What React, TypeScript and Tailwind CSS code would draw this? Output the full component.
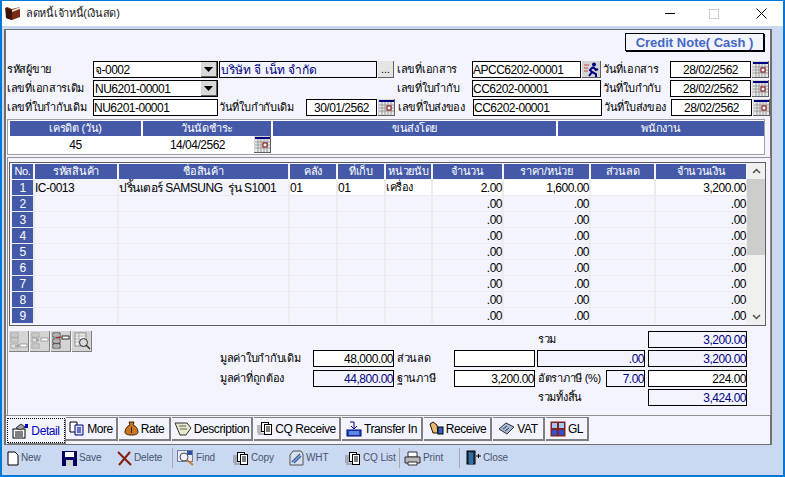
import React from 'react';

const FONT = "font-['Liberation_Sans','Noto_Sans','DejaVu_Sans',sans-serif]";
const GRID_COLS = 'grid grid-cols-[21px_82px_169px_46px_46px_45px_69px_85px_63px_90px] gap-x-[2px]';

const BookIcon = () => (
  <svg width="16" height="15" viewBox="0 0 16 15">
    <path d="M0 2l2-1 5 2 8-2v10l-8 3-6-2z" fill="#7a2a10" />
    <path d="M1 2l6 2v10l-6-2z" fill="#3a1408" />
    <path d="M7 4l8-3v2l-8 3z" fill="#e8e0d0" />
  </svg>
);

const CalendarIcon = () => (
  <svg width="15" height="15" viewBox="0 0 15 15">
    <rect x="0" y="0" width="15" height="15" fill="#e8e8e8" />
    <rect x="0" y="0" width="15" height="2" fill="#000080" />
    <path d="M0 5h15M0 8h15M0 11h15M3 2v13M6 2v13M9 2v13M12 2v13" stroke="#9a9a9a" strokeWidth="1" />
    <rect x="8" y="6" width="4" height="4" fill="#fff" stroke="#800000" />
  </svg>
);

const CalButton = () => (
  <div className="flex h-[17px] w-[17px] shrink-0 items-center justify-center border-r border-b border-[#606060] bg-[#d4d4d4]">
    <CalendarIcon />
  </div>
);

const RunIcon = () => (
  <svg width="15" height="15" viewBox="0 0 15 15">
    <path d="M0 3h5M0 6h4M0 9h4" stroke="#d04040" strokeWidth="1" />
    <circle cx="10" cy="2.5" r="2" fill="#000080" />
    <path d="M9 5l-3 3 2 2-3 4M9 5l3 3 2-1M8 10l4 2 0 3" stroke="#000080" strokeWidth="2" fill="none" />
  </svg>
);

const Arrow = () => (
  <svg width="9" height="5" viewBox="0 0 9 5"><path d="M0 0h9L4.5 5z" fill="#000" /></svg>
);

const Box = ({ className = '', children }: { className?: string; children?: React.ReactNode }) => (
  <div className={'flex h-[17px] shrink-0 items-center overflow-hidden whitespace-nowrap border border-black text-[12px] leading-none tracking-[-0.5px] ' + className}>
    {children}
  </div>
);

const Label = ({ className = '', children }: { className?: string; children: React.ReactNode }) => (
  <div className={'flex h-[17px] shrink-0 items-center whitespace-nowrap text-[11px] leading-none tracking-[-0.3px] text-black ' + className}>
    {children}
  </div>
);

const Combo = ({ value }: { value: string }) => (
  <Box className="w-[125px] justify-between bg-white pl-[1px]">
    <span>{value}</span>
    <span className="flex h-[15px] w-[16px] items-center justify-center border-r border-b border-[#606060] bg-[#d8d8d8]"><Arrow /></span>
  </Box>
);

const items = [
  { no: '1', code: 'IC-0013', name: 'ปริ้นเตอร์ SAMSUNG  รุ่น S1001', wh: '01', loc: '01', unit: 'เครื่อง', qty: '2.00', price: '1,600.00', amount: '3,200.00' },
  ...['2', '3', '4', '5', '6', '7', '8', '9'].map((no) => ({ no, code: '', name: '', wh: '', loc: '', unit: '', qty: '.00', price: '.00', amount: '.00' })),
];

const headers = ['No.', 'รหัสสินค้า', 'ชื่อสินค้า', 'คลัง', 'ที่เก็บ', 'หน่วยนับ', 'จำนวน', 'ราคา/หน่วย', 'ส่วนลด', 'จำนวนเงิน'];

const ItemGrid = () => (
  <div className="ml-[1px] flex h-[164px] w-[757px] border border-[#606060] bg-[#f3f4fd]">
    <div className="w-[737px] pl-[2px] pt-[1px]">
      <div className={GRID_COLS}>
        {headers.map((h) => (
          <div key={h} className="flex h-[15px] items-center justify-center whitespace-nowrap bg-[#445aa9] text-[11px] leading-none tracking-[-0.3px] text-white">{h}</div>
        ))}
      </div>
      <div className="mt-[1px] flex flex-col gap-y-[1px] bg-[#ececef]">
        {items.map((r) => {
          const first = r.no === '1';
          const cell = first ? 'bg-white' : 'bg-[#f3f4fd]';
          return (
            <div key={r.no} className={GRID_COLS + ' h-[15px] text-[12px] leading-none tracking-[-0.5px] text-black'}>
              <div className="flex items-center justify-center bg-[#445aa9] text-white">{r.no}</div>
              <div className="flex items-center bg-[#f3f4fd]">{r.code}</div>
              <div className="flex items-center whitespace-pre bg-[#f3f4fd]">{r.name}</div>
              <div className={'flex items-center ' + cell}>{r.wh}</div>
              <div className={'flex items-center ' + cell}>{r.loc}</div>
              <div className={'flex items-center whitespace-nowrap text-[11px] ' + cell}>{r.unit}</div>
              <div className={'flex items-center justify-end ' + cell}>{r.qty}</div>
              <div className={'flex items-center justify-end ' + cell}>{r.price}</div>
              <div className={cell} />
              <div className={'flex items-center justify-end ' + cell}>{r.amount}</div>
            </div>
          );
        })}
      </div>
    </div>
    <div className="flex w-[18px] flex-col items-center bg-[#f0f0f0]">
      <div className="flex h-[16px] w-full items-center justify-center">
        <svg width="9" height="6" viewBox="0 0 9 6"><path d="M1 5l3.5-3.5L8 5" stroke="#505050" strokeWidth="1.5" fill="none" /></svg>
      </div>
      <div className="h-[76px] w-full bg-[#cdcdcd]" />
      <div className="flex-1" />
      <div className="flex h-[16px] w-full items-center justify-center">
        <svg width="9" height="6" viewBox="0 0 9 6"><path d="M1 1l3.5 3.5L8 1" stroke="#505050" strokeWidth="1.5" fill="none" /></svg>
      </div>
    </div>
  </div>
);

const Blocks = ({ ys, color }: { ys: number[]; color: string }) => (
  <>
    {ys.map((y) => (
      <g key={y}>
        <rect x="1" y={y} width="7" height="4" fill={color === '#000' ? '#fff' : '#e0e0e0'} stroke={color} strokeWidth="0.7" />
        <path d={'M2 ' + (y + 2) + 'h5'} stroke={color} strokeWidth="0.6" />
      </g>
    ))}
  </>
);

const TreeButton = ({ children }: { children: React.ReactNode }) => (
  <div className="flex h-[21px] w-[20px] shrink-0 items-center justify-center border-r border-b border-[#808080] bg-[#d4d4d4]">
    <svg width="18" height="18" viewBox="0 0 18 18">{children}</svg>
  </div>
);

const TreeButtons = () => (
  <div className="mt-[5px] flex h-[21px] w-[85px] shrink-0 items-center gap-x-[1px]">
    <TreeButton>
      <Blocks ys={[1, 6]} color="#909090" />
      <rect x="1" y="12" width="7" height="4" fill="#e0e0e0" stroke="#909090" strokeWidth="0.7" />
      <path d="M9 14h-4" stroke="#808080" />
      <rect x="10" y="12" width="7" height="3" fill="#fff" stroke="#808080" strokeWidth="0.7" />
    </TreeButton>
    <TreeButton>
      <Blocks ys={[1, 12]} color="#909090" />
      <rect x="1" y="6" width="5" height="4" fill="#e0e0e0" stroke="#909090" strokeWidth="0.7" />
      <path d="M8 8h-3" stroke="#808080" />
      <rect x="10" y="6" width="7" height="3" fill="#fff" stroke="#808080" strokeWidth="0.7" />
    </TreeButton>
    <TreeButton>
      <Blocks ys={[1, 7, 12]} color="#000" />
      <path d="M4 5.500h5" stroke="#c02020" />
      <rect x="10" y="4" width="7" height="3" fill="#fff" stroke="#000" strokeWidth="0.8" />
    </TreeButton>
    <TreeButton>
      <rect x="2" y="1" width="11" height="13" fill="#f0f0f0" stroke="#707070" strokeWidth="0.7" />
      <path d="M2 4h11M2 7h5M2 10h5M6 1v13" stroke="#909090" strokeWidth="0.6" />
      <circle cx="10.500" cy="10.500" r="4" fill="#d8d8d8" stroke="#303030" />
      <path d="M13 13l4 4" stroke="#303030" strokeWidth="1.5" />
    </TreeButton>
  </div>
);

function StackIcon() {
  return (
    <svg width="16" height="13" viewBox="0 0 16 13">
      <path d="M0 4h4M0 6h4M0 8h4M0 10h4M1 12h6" stroke="#808080" />
      <rect x="4.500" y="0.500" width="7" height="9" fill="#fff" stroke="#000" />
      <rect x="7.500" y="2.500" width="7" height="10" fill="#fff" stroke="#000" />
      <path d="M9 5h4M9 7h4M9 9h4" stroke="#000" />
    </svg>
  );
}

const tabs = [
  { label: 'More', w: 'w-[52px]', icon: <svg width="16" height="15" viewBox="0 0 16 15"><path d="M1 1h7v10H1z" fill="#fff" stroke="#000" /><path d="M6 4h8v10H6z" fill="#d8e0ff" stroke="#000080" /><path d="M8 7h4M8 9h4M8 11h4" stroke="#000080" /></svg> },
  { label: 'Rate', w: 'w-[52px]', icon: <svg width="15" height="15" viewBox="0 0 15 15"><path d="M5 1h5L9 4c3 1 5 4 5 7 0 2-2 3-6.500 3S1 13 1 11c0-3 2-6 5-7z" fill="#c87820" stroke="#402000" /><path d="M7.500 6v6" stroke="#402000" /></svg> },
  { label: 'Description', w: 'w-[81px]', icon: <svg width="18" height="15" viewBox="0 0 18 15"><path d="M1 2h12l4 5-5 7H6z" fill="#e8e8c8" stroke="#303030" /><path d="M5 5h7M6 8h7" stroke="#606060" /></svg> },
  { label: 'CQ Receive', w: 'w-[87px]', icon: <StackIcon /> },
  { label: 'Transfer In', w: 'w-[81px]', icon: <svg width="16" height="16" viewBox="0 0 16 16"><rect x="1" y="9" width="14" height="6" fill="#2050c0" stroke="#000080" /><path d="M8 1v6M5 5l3 3 3-3M4 1h4" stroke="#000080" fill="none" /><path d="M3 11h10M3 13h10" stroke="#a0c0ff" /></svg> },
  { label: 'Receive', w: 'w-[68px]', icon: <svg width="16" height="15" viewBox="0 0 16 15"><path d="M2 3l3-2 4 3 1 8H5z" fill="#e8b878" stroke="#201000" /><rect x="10" y="6" width="5" height="7" fill="#3060c0" stroke="#000" /></svg> },
  { label: 'VAT', w: 'w-[52px]', icon: <svg width="17" height="13" viewBox="0 0 17 13"><path d="M1 7l7-6 8 4-7 7z" fill="#a8b8d8" stroke="#303030" /><path d="M5 7l4-3M7 9l4-3" stroke="#404040" /></svg> },
  { label: 'GL', w: 'w-[43px]', icon: <svg width="16" height="16" viewBox="0 0 16 16"><rect x="0.500" y="0.500" width="15" height="15" fill="#802020" /><path d="M2 2h5v5H2zM9 2h5v5H9z" fill="#a0c8f8" /><path d="M2 9h5v5H2zM9 9h5v5H9z" fill="#3050d0" /></svg> },
];

const tools = [
  { label: 'New', w: 'w-[55px]', icon: <svg width="12" height="15" viewBox="0 0 12 15"><path d="M1 1h7l3 3v10H1z" fill="#fff" stroke="#000" /></svg> },
  { label: 'Save', w: 'w-[55px]', icon: <svg width="15" height="15" viewBox="0 0 15 15"><rect width="15" height="15" fill="#000060" /><rect x="3" y="1" width="9" height="5" fill="#fff" /><rect x="4" y="9" width="7" height="6" fill="#d0d0d0" /></svg> },
  { label: 'Delete', w: 'w-[53px]', icon: <svg width="15" height="15" viewBox="0 0 15 15"><path d="M1 1l13 13M13 1L2 14" stroke="#802010" strokeWidth="2" /></svg> },
];

const tools2 = [
  { label: 'Find', w: 'w-[56px]', icon: <svg width="17" height="16" viewBox="0 0 17 16"><rect x="0.500" y="0.500" width="15" height="11" fill="#e8e8f8" stroke="#7080a0" /><rect x="10" y="1" width="5" height="4" fill="#3050a0" /><circle cx="7" cy="7" r="4" fill="#f0f4ff" stroke="#505050" /><path d="M10 10l6 5" stroke="#c08030" strokeWidth="2" /></svg> },
  { label: 'Copy', w: 'w-[56px]', icon: <StackIcon /> },
  { label: 'WHT', w: 'w-[56px]', icon: <svg width="15" height="16" viewBox="0 0 15 16"><path d="M4 1h8l2 3v11H1V5z" fill="#d8e0f0" stroke="#505050" /><path d="M3 12l8-8M5 13l7-7" stroke="#3060a0" strokeWidth="1.500" /></svg> },
  { label: 'CQ List', w: 'w-[52px]', icon: <StackIcon /> },
];

const Tool = ({ label, w, icon }: { label: string; w: string; icon: React.ReactNode }) => (
  <div className={'flex h-[22px] shrink-0 items-center gap-[2px] whitespace-nowrap text-[10px] leading-none tracking-[-0.1px] text-[#46566e] ' + w}>
    {icon}
    <span>{label}</span>
  </div>
);

const Sep = () => <div className="ml-[2px] mr-[4px] h-[20px] w-[1px] shrink-0 bg-[#a8a8a8]" />;

export default function App() {
  return (
    <div className={'flex h-[477px] w-[785px] flex-col overflow-hidden border-x-2 border-b-2 border-t border-[#0078d7] bg-[#cad8f1] text-black ' + FONT}>
      <div className="flex h-[25px] shrink-0 items-center bg-white pl-[3px]">
        <BookIcon />
        <span className="ml-[5px] text-[11px] tracking-[-0.3px] text-[#202020]">ลดหนี้เจ้าหนี้(เงินสด)</span>
        <div className="ml-auto flex items-center">
          <div className="h-[1px] w-[10px] bg-black" />
          <div className="ml-[34px] h-[10px] w-[10px] border border-[#cccccc]" />
          <svg className="ml-[37px] mr-[16px]" width="11" height="11" viewBox="0 0 11 11"><path d="M0.500 0.500l10 10M10.500 0.500l-10 10" stroke="#000" /></svg>
        </div>
      </div>

      <div className="ml-[2px] mt-[3px] flex h-[416px] w-[768px] shrink-0 flex-col border-x-2 border-y border-[#707070] bg-[#f3f4fd]">
        <div className="flex h-[31px] shrink-0 justify-end pr-[6px] pt-[3px]">
          <div className="flex h-[18px] w-[139px] items-center justify-center border border-black text-[13px] font-bold leading-none text-[#4468c4] shadow-[1px_1px_0_#000]">
            Credit Note( Cash )
          </div>
        </div>

        <div className="flex shrink-0 flex-col gap-y-[2px] pl-[1px]">
          <div className="flex items-center">
            <Label className="w-[86px]">รหัสผู้ขาย</Label>
            <Combo value="จ-0002" />
            <Box className="ml-[1px] w-[158px] bg-[#f3f4fd] pl-[1px] text-[11px] tracking-normal text-[#000080]">บริษัท จี เน็ท จำกัด</Box>
            <div className="ml-[1px] flex h-[17px] w-[16px] items-center justify-center border-r border-b border-[#606060] bg-[#e4e4e4] text-[11px] leading-none">...</div>
            <Label className="ml-[3px] w-[75px]">เลขที่เอกสาร</Label>
            <Box className="w-[109px] bg-white">APCC6202-00001</Box>
            <div className="ml-[1px] flex h-[17px] w-[19px] items-center justify-center border-r border-b border-[#606060] bg-[#d4d4d4]"><RunIcon /></div>
            <Label className="ml-[2px] w-[67px]">วันที่เอกสาร</Label>
            <Box className="w-[81px] justify-center bg-white">28/02/2562</Box>
            <div className="ml-[1px]"><CalButton /></div>
          </div>
          <div className="flex items-center">
            <Label className="w-[86px]">เลขที่เอกสารเดิม</Label>
            <Combo value="NU6201-00001" />
            <div className="w-[179px] shrink-0" />
            <Label className="w-[75px]">เลขที่ใบกำกับ</Label>
            <Box className="w-[129px] bg-white">CC6202-00001</Box>
            <Label className="ml-[2px] w-[67px]">วันที่ใบกำกับ</Label>
            <Box className="w-[81px] justify-center bg-white">28/02/2562</Box>
            <div className="ml-[1px]"><CalButton /></div>
          </div>
          <div className="flex items-center">
            <Label className="w-[86px]">เลขที่ใบกำกับเดิม</Label>
            <Box className="w-[125px] bg-white">NU6201-00001</Box>
            <Label className="ml-[1px] w-[87px]">วันที่ใบกำกับเดิม</Label>
            <Box className="w-[71px] justify-center bg-white">30/01/2562</Box>
            <div className="ml-[1px]"><CalButton /></div>
            <Label className="ml-[3px] w-[75px]">เลขที่ใบส่งของ</Label>
            <Box className="w-[129px] bg-white">CC6202-00001</Box>
            <Label className="ml-[2px] w-[67px]">วันที่ใบส่งของ</Label>
            <Box className="w-[81px] justify-center bg-white">28/02/2562</Box>
            <div className="ml-[1px]"><CalButton /></div>
          </div>
        </div>

        <div className="ml-[1px] mt-[3px] h-[36px] w-[758px] shrink-0 border border-[#a0a0a0] bg-white pl-[2px] pt-[1px]">
          <div className="grid grid-cols-[131px_128px_283px_206px] gap-x-[2px]">
            {['เครดิต (วัน)', 'วันนัดชำระ', 'ขนส่งโดย', 'พนักงาน'].map((h) => (
              <div key={h} className="flex h-[15px] items-center justify-center bg-[#445aa9] text-[11px] leading-none tracking-[-0.3px] text-white">{h}</div>
            ))}
            <div className="flex h-[17px] items-center justify-center text-[12px] leading-none tracking-[-0.5px]">45</div>
            <div className="flex h-[17px] items-center justify-end text-[12px] leading-none tracking-[-0.5px]">
              <span className="mr-[29px]">14/04/2562</span>
              <CalButton />
            </div>
            <div className="h-[17px]" />
            <div className="h-[17px]" />
          </div>
        </div>

        <div className="ml-[1px] mt-[2px] flex h-[258px] w-[764px] shrink-0 flex-col border-x border-t border-[#909090] pt-[4px]">
          <ItemGrid />
          <div className="flex flex-1 pl-[1px]">
            <TreeButtons />
            <div className="flex flex-1 flex-col gap-y-[2px] pt-[5px]">
              <div className="flex">
                <div className="w-[444px] shrink-0" />
                <Label className="w-[110px]">รวม</Label>
                <Box className="w-[99px] justify-end bg-[#f3f4fd] text-[#000080]">3,200.00</Box>
              </div>
              <div className="flex">
                <Label className="ml-[126px] w-[93px]">มูลค่าใบกำกับเดิม</Label>
                <Box className="w-[81px] justify-end bg-white">48,000.00</Box>
                <Label className="ml-[3px] w-[57px]">ส่วนลด</Label>
                <Box className="w-[81px] bg-white" />
                <Box className="ml-[2px] w-[108px] justify-end bg-[#f3f4fd] text-[#000080]">.00</Box>
                <Box className="ml-[3px] w-[99px] justify-end bg-[#f3f4fd] text-[#000080]">3,200.00</Box>
              </div>
              <div className="mt-[1px] flex">
                <Label className="ml-[126px] w-[93px]">มูลค่าที่ถูกต้อง</Label>
                <Box className="w-[81px] justify-end bg-[#f3f4fd] text-[#000080]">44,800.00</Box>
                <Label className="ml-[3px] w-[57px]">ฐานภาษี</Label>
                <Box className="w-[81px] justify-end bg-white">3,200.00</Box>
                <Label className="ml-[3px] w-[68px]">อัตราภาษี (%)</Label>
                <Box className="w-[39px] justify-end bg-[#f3f4fd] text-[#000080]">7.00</Box>
                <Box className="ml-[3px] w-[99px] justify-end bg-white">224.00</Box>
              </div>
              <div className="flex">
                <div className="w-[444px] shrink-0" />
                <Label className="w-[110px]">รวมทั้งสิ้น</Label>
                <Box className="w-[99px] justify-end bg-[#f3f4fd] text-[#000080]">3,424.00</Box>
              </div>
            </div>
          </div>
        </div>

        <div className="flex h-[31px] shrink-0 border-t border-[#909090] pl-[1px] pt-[1px]">
          <div className="mt-[1px] flex h-[25px] w-[58px] shrink-0 items-center justify-center gap-[2px] border border-dotted border-black text-[12px] leading-none tracking-[-0.4px] text-[#0000c0] shadow-[1px_1px_0_#808080]">
            <svg width="17" height="16" viewBox="0 0 17 16"><rect x="1" y="6" width="12" height="9" fill="#fff" stroke="#000" /><path d="M3 9h8M3 11h8M3 13h8" stroke="#000" /><path d="M4 5l5-4 4 3-4 3z" fill="#a0a0a0" stroke="#303030" /><rect x="13" y="1" width="3" height="4" fill="#0000c0" /></svg>
            Detail
          </div>
          {tabs.map((t) => (
            <div key={t.label} className={'ml-[1px] flex h-[24px] shrink-0 items-center justify-center gap-[2px] border-r-2 border-b-2 border-t border-[#808080] text-[12px] leading-none tracking-[-0.4px] text-black ' + t.w}>
              {t.icon}
              <span>{t.label}</span>
            </div>
          ))}
        </div>
      </div>

      <div className="flex flex-1 items-center pb-[4px] pl-[5px]">
        {tools.map((t) => <Tool key={t.label} {...t} />)}
        <Sep />
        {tools2.map((t) => <Tool key={t.label} {...t} />)}
        <Sep />
        <Tool label="Print" w="w-[53px]" icon={<svg width="17" height="15" viewBox="0 0 17 15"><path d="M4 1h9v5H4z" fill="#fff" stroke="#303030" /><path d="M1 6h15v6H1z" fill="#b8b8b8" stroke="#303030" /><path d="M4 11h9v3H4z" fill="#fff" stroke="#303030" /></svg>} />
        <Sep />
        <div className="ml-[2px]">
          <Tool label="Close" w="w-[60px]" icon={<svg width="15" height="16" viewBox="0 0 15 16"><rect x="1" y="1" width="8" height="13" fill="#203858" stroke="#000" /><path d="M3 2l4 1v12l-4-1z" fill="#3070a0" /><path d="M10 6h5M12.500 4v4" stroke="#000" /></svg>} />
        </div>
      </div>
    </div>
  );
}
